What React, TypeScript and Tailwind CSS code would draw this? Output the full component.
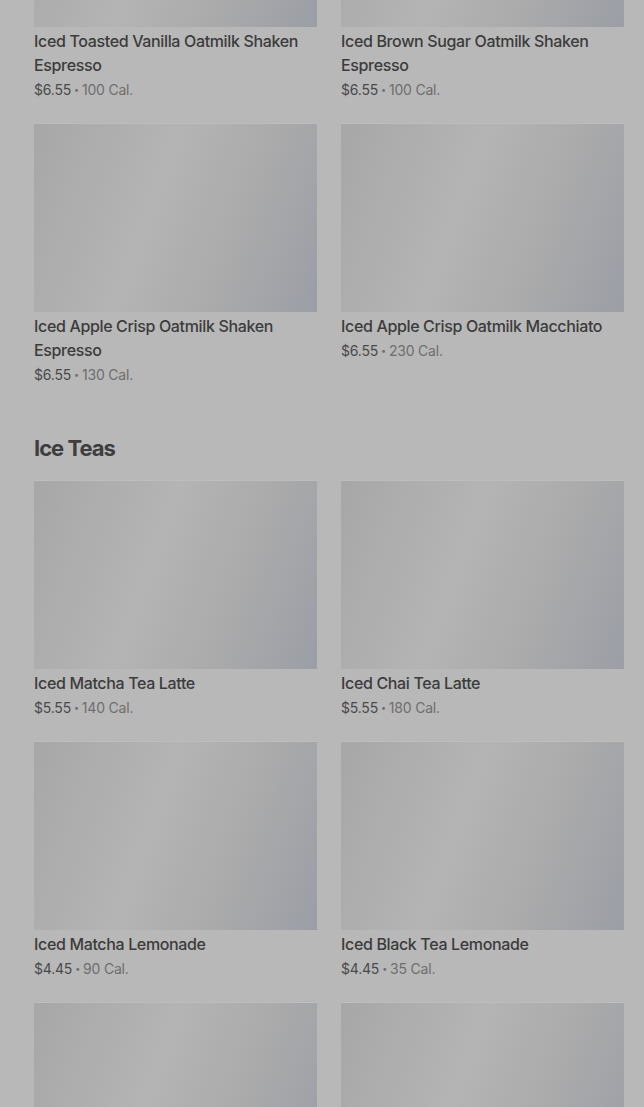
import React from "react";

type Item = { name: string; price: string; cal: string };

const rows: { title?: string; items: Item[] }[] = [
  {
    items: [
      { name: "Iced Toasted Vanilla Oatmilk Shaken Espresso", price: "$6.55", cal: "100 Cal." },
      { name: "Iced Brown Sugar Oatmilk Shaken Espresso", price: "$6.55", cal: "100 Cal." },
      { name: "Iced Apple Crisp Oatmilk Shaken Espresso", price: "$6.55", cal: "130 Cal." },
      { name: "Iced Apple Crisp Oatmilk Macchiato", price: "$6.55", cal: "230 Cal." },
    ],
  },
  {
    title: "Ice Teas",
    items: [
      { name: "Iced Matcha Tea Latte", price: "$5.55", cal: "140 Cal." },
      { name: "Iced Chai Tea Latte", price: "$5.55", cal: "180 Cal." },
      { name: "Iced Matcha Lemonade", price: "$4.45", cal: "90 Cal." },
      { name: "Iced Black Tea Lemonade", price: "$4.45", cal: "35 Cal." },
      { name: "Iced Peach Green Tea", price: "$4.45", cal: "60 Cal." },
      { name: "Iced Passion Tango Tea", price: "$4.45", cal: "0 Cal." },
    ],
  },
];

function Card({ item }: { item: Item }) {
  return (
    <div className="flex flex-col pb-[23px]">
      <div className="h-[189px] w-full border-t border-[#bdbdbd] bg-[linear-gradient(110deg,#a7a7a7_0%,#aeaeae_22%,#b4b4b4_42%,#ababab_68%,#9b9ea6_100%)]" />
      <div className="mt-[2px] text-[16px] leading-[24px] font-medium tracking-[-0.35px] text-[#3c3c3c]">
        {item.name}
      </div>
      <div className="mt-[3px] flex items-center text-[14px] leading-[20px] tracking-[-0.2px] text-[#4a4a4a]">
        <span>{item.price}</span>
        <span className="mx-[3px] text-[9px] leading-[20px] text-[#6e6e6e]">•</span>
        <span className="text-[#6e6e6e]">{item.cal}</span>
      </div>
    </div>
  );
}

export default function App() {
  return (
    <div
      className="h-[1107px] w-[644px] overflow-hidden bg-[#b8b8b8]"
      style={{ fontFamily: "Inter, 'Noto Sans', sans-serif" }}
    >
      <div className="mt-[-162px] pl-[34px] pr-[20px]">
        {rows.map((sec, i) => (
          <div key={i} className={sec.title ? "mt-[24px]" : ""}>
            {sec.title && (
              <h2 className="mb-[16px] text-[22px] leading-[32px] font-bold tracking-[-1px] text-[#3e3e3e]">
                {sec.title}
              </h2>
            )}
            <div className="grid grid-cols-2 gap-x-[24px]">
              {sec.items.map((it) => (
                <Card key={it.name} item={it} />
              ))}
            </div>
          </div>
        ))}
      </div>
    </div>
  );
}
